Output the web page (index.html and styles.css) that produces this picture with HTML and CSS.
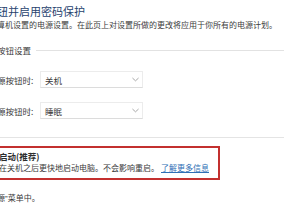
FILE: index.html
```html
<!DOCTYPE html>
<html lang="zh-CN">
<head>
<meta charset="utf-8">
<link rel="stylesheet" href="styles.css">
</head>
<body>
<div class="page">
  <h1 class="title">钮并启用密码保护</h1>
  <p class="desc">算机设置的电源设置。在此页上对设置所做的更改将应用于你所有的电源计划。</p>
  <div class="section-head"><span class="section-name">按钮设置</span><span class="rule"></span></div>
  <div class="row">
    <span class="label">源按钮时:</span>
    <div class="select"><span>关机</span><svg class="chev" viewBox="0 0 8 5" width="7" height="5"><path d="M0.5 0.8 L4 4 L7.5 0.8" fill="none" stroke="#9a9a9a" stroke-width="1"/></svg></div>
  </div>
  <div class="row row2">
    <span class="label">源按钮时:</span>
    <div class="select"><span>睡眠</span><svg class="chev" viewBox="0 0 8 5" width="7" height="5"><path d="M0.5 0.8 L4 4 L7.5 0.8" fill="none" stroke="#9a9a9a" stroke-width="1"/></svg></div>
  </div>
  <div class="divider"></div>
  <div class="highlight">
    <div class="opt-title">启动(推荐)</div>
    <div class="opt-desc">在关机之后更快地启动电脑。不会影响重启。<a class="link" href="#">了解更多信息</a></div>
  </div>
  <p class="foot">源<span class="quote">”</span>菜单中。</p>
</div>
</body>
</html>
```
FILE: styles.css
```css
html, body {
  margin: 0;
  padding: 0;
  background: #ffffff;
  overflow: hidden;
}
body {
  width: 284px;
  height: 215px;
  font-family: "Noto Sans CJK SC", "Noto Sans", sans-serif;
  color: #3a3a3a;
}
.page {
  margin-left: -3px;
  display: flex;
  flex-direction: column;
}
.title {
  margin: 0;
  padding-top: 1px;
  font-size: 11px;
  line-height: 20px;
  font-weight: 400;
  color: #27426e;
  white-space: nowrap;
}
.desc {
  margin: 0;
  font-size: 8px;
  line-height: 8px;
  color: #3c3c3c;
  white-space: nowrap;
}
.section-head {
  margin-top: 15px;
  height: 12px;
  display: flex;
  align-items: center;
  gap: 5px;
}
.section-name {
  font-size: 8.5px;
  line-height: 12px;
  color: #3a3a3a;
  white-space: nowrap;
}
.rule {
  flex: 1;
  height: 1px;
  background: #e2e2e2;
}
.row {
  margin-top: 15px;
  height: 17px;
  display: flex;
  align-items: center;
}
.row2 {
  margin-top: 14px;
}
.label {
  width: 43px;
  font-size: 8.5px;
  color: #3a3a3a;
  white-space: nowrap;
}
.select {
  box-sizing: border-box;
  width: 103px;
  height: 17px;
  border: 1px solid #ececec;
  border-bottom-color: #dcdcdc;
  display: flex;
  align-items: center;
  justify-content: space-between;
  padding: 0 3px 0 4px;
  font-size: 8.5px;
  color: #3a3a3a;
}
.chev {
  display: block;
}
.divider {
  margin-top: 18px;
  height: 1px;
  background: #e4e4e4;
}
.highlight {
  margin-top: 8px;
  margin-left: -4px;
  width: 227px;
  box-sizing: border-box;
  border: 2px solid #c3302f;
  padding: 3px 0 4px 4px;
}
.opt-title {
  font-size: 8.5px;
  line-height: 10px;
  font-weight: 700;
  color: #2e2e2e;
  white-space: nowrap;
}
.opt-desc {
  margin-top: 1px;
  font-size: 8px;
  line-height: 12px;
  color: #3a3a3a;
  white-space: nowrap;
}
.link {
  margin-left: 2px;
  color: #2f6fb5;
  text-decoration: underline;
}
.foot {
  margin: 13px 0 0 0;
  font-size: 8px;
  line-height: 10px;
  color: #3a3a3a;
  white-space: nowrap;
}
.quote {
  font-family: "Liberation Sans", sans-serif;
}
```
